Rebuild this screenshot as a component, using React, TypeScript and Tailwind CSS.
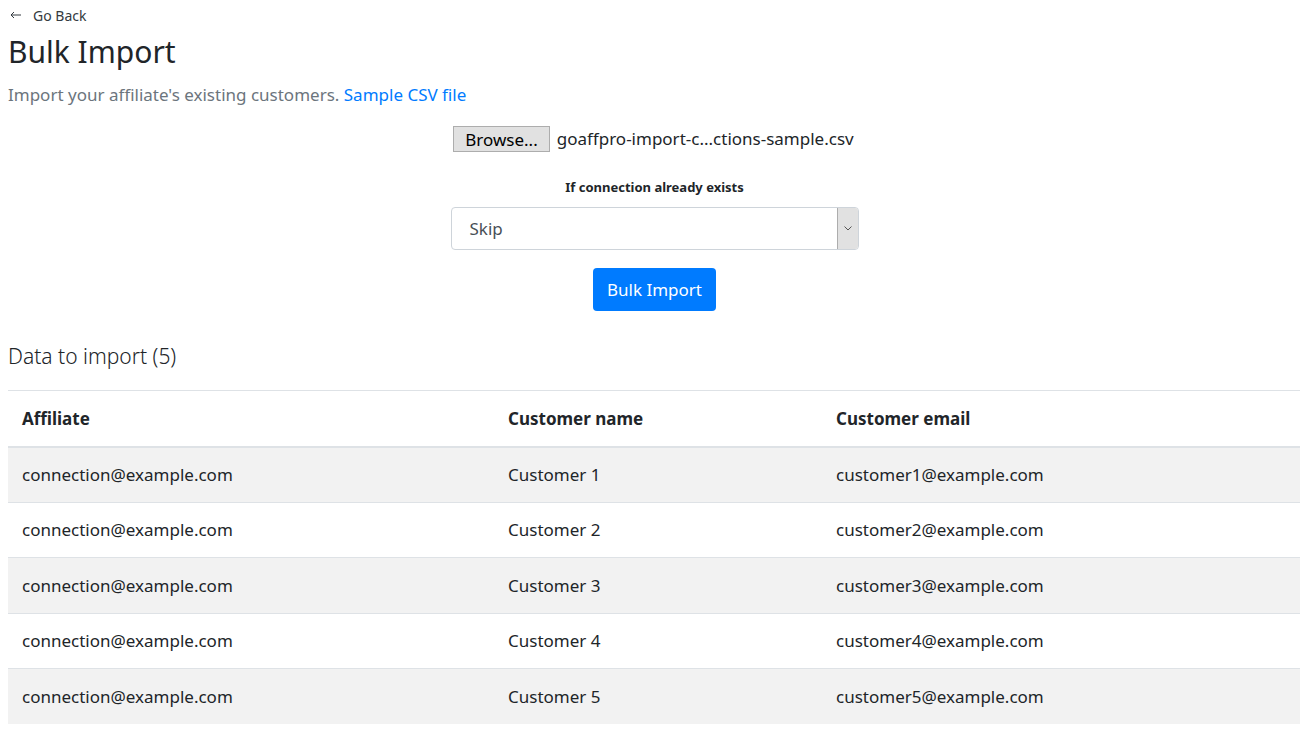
import React from 'react';

const rows = [1, 2, 3, 4, 5].map((n) => ({
  affiliate: 'connection@example.com',
  name: `Customer ${n}`,
  email: `customer${n}@example.com`,
}));

const App: React.FC = () => {
  return (
    <div className="min-h-screen bg-white text-[#212529] px-2 pt-1 font-['Noto_Sans',sans-serif]">
      {/* back link */}
      <div className="flex items-center gap-[11px] h-[22px] text-[14px] text-[#343a40]">
        <svg width="12" height="8" viewBox="0 0 12 8" fill="none" stroke="#343a40" strokeWidth="1" className="ml-[2px]">
          <path d="M11 4 H1 M4 1 L1 4 L4 7" />
        </svg>
        <span>Go Back</span>
      </div>
      <h1 className="text-[30px] leading-[40px] font-normal mt-[6px]">Bulk Import</h1>
      <p className="text-[17px] leading-[28px] text-[#6c757d] mt-[9px]">
        Import your affiliate's existing customers. <a className="text-[#007bff]">Sample CSV file</a>
      </p>

      {/* form */}
      <div className="flex flex-col items-center mt-[17px]">
        <div className="flex items-center gap-[7px] h-[26px] -ml-[2px]">
          <button className="h-[26px] px-[11px] bg-[#e1e1e1] border border-[#adadad] text-[17px] text-black leading-none">
            Browse...
          </button>
          <span className="text-[17px]">goaffpro-import-c...ctions-sample.csv</span>
        </div>
        <label className="mt-[25px] text-[13px] font-bold leading-[20px]">If connection already exists</label>
        <div className="mt-[10px] w-[408px] h-[43px] border border-[#ced4da] rounded-[4px] flex items-stretch">
          <span className="flex-1 flex items-center pl-[18px] text-[17px] text-[#495057]">Skip</span>
          <span className="w-[21px] bg-[#e1e1e1] border-l border-[#adadad] flex items-center justify-center rounded-r-[3px]">
            <svg width="8" height="5" viewBox="0 0 8 5" fill="none" stroke="#555" strokeWidth="1">
              <path d="M0.5 0.5 L4 4 L7.5 0.5" />
            </svg>
          </span>
        </div>
        <button className="mt-[18px] h-[43px] px-[14px] bg-[#007bff] text-white rounded-[4px] text-[17px]">
          Bulk Import
        </button>
      </div>

      {/* table */}
      <h3 className="mt-[29px] text-[21px] font-light leading-[32px]">Data to import (5)</h3>
      <table className="mt-[18px] w-[1292px] border-collapse text-[17px]">
        <thead>
          <tr className="h-[56px] border-t border-[#dee2e6]">
            <th className="w-[486px] text-left pl-[14px] font-bold border-b-2 border-[#dee2e6]">Affiliate</th>
            <th className="w-[328px] text-left pl-[14px] font-bold border-b-2 border-[#dee2e6]">Customer name</th>
            <th className="text-left pl-[14px] font-bold border-b-2 border-[#dee2e6]">Customer email</th>
          </tr>
        </thead>
        <tbody>
          {rows.map((r, i) => (
            <tr key={i} className={`h-[55.5px] border-t border-[#dee2e6] ${i % 2 === 0 ? 'bg-[#f2f2f2]' : 'bg-white'}`}>
              <td className="pl-[14px]">{r.affiliate}</td>
              <td className="pl-[14px]">{r.name}</td>
              <td className="pl-[14px]">{r.email}</td>
            </tr>
          ))}
        </tbody>
      </table>
    </div>
  );
};

export default App;
